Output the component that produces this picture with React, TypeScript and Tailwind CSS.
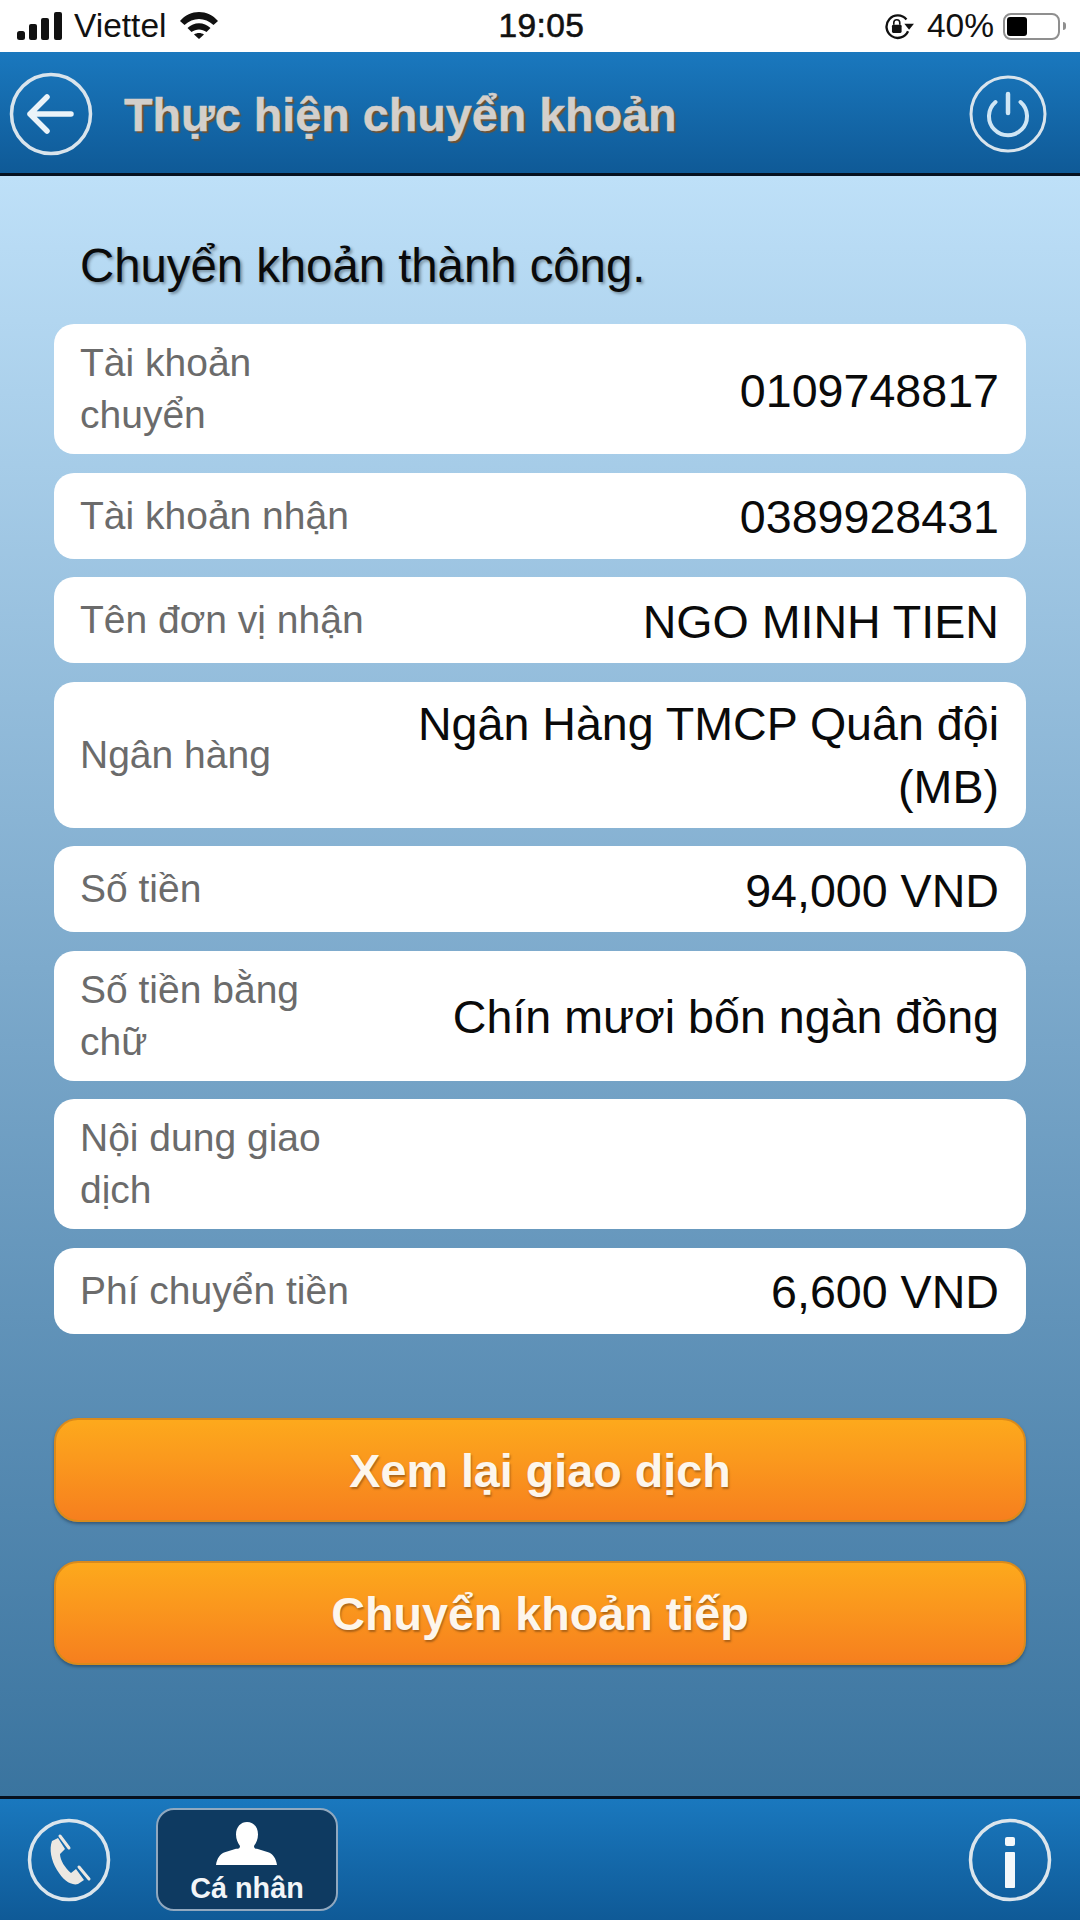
const font = { fontFamily: '"Liberation Sans", Arial, sans-serif' };

type Row = { label: string; value?: string; h: string; multi?: boolean };

const rows: Row[] = [
  { label: "Tài khoản chuyển", value: "0109748817", h: "h-[130px]" },
  { label: "Tài khoản nhận", value: "0389928431", h: "h-[86px]" },
  { label: "Tên đơn vị nhận", value: "NGO MINH TIEN", h: "h-[86px]" },
  { label: "Ngân hàng", value: "Ngân Hàng TMCP Quân đội (MB)", h: "h-[146px]", multi: true },
  { label: "Số tiền", value: "94,000 VND", h: "h-[86px]" },
  { label: "Số tiền bằng chữ", value: "Chín mươi bốn ngàn đồng", h: "h-[130px]" },
  { label: "Nội dung giao dịch", h: "h-[130px]" },
  { label: "Phí chuyển tiền", value: "6,600 VND", h: "h-[86px]" },
];

function StatusBar() {
  return (
    <div className="grid h-[52px] shrink-0 grid-cols-3 items-center bg-white pl-[17px] pr-[14px] text-[33.5px] text-[#111]">
      <div className="flex items-center justify-self-start">
        <svg width="45" height="28" viewBox="0 0 45 28" className="mb-[1px]">
          <rect x="0" y="19" width="8" height="9" rx="2.5" fill="#111" />
          <rect x="12" y="12" width="8" height="16" rx="2" fill="#111" />
          <rect x="24" y="6" width="8" height="22" rx="2" fill="#111" />
          <rect x="37" y="0" width="8" height="28" rx="2" fill="#111" />
        </svg>
        <span className="ml-[12px] leading-none">Viettel</span>
        <svg width="38" height="27" viewBox="0 0 38 27" className="mb-[1px] ml-[13px]">
          <path d="M0 9 C10 -3 28 -3 38 9 L33.5 13 C25 5 13 5 4.5 13 Z" fill="#111" />
          <path d="M7.5 16 C14 9.5 24 9.5 30.5 16 L26.5 20 C22 16.5 16 16.5 11.5 20 Z" fill="#111" />
          <path d="M14 22.5 C17 20.5 21 20.5 24 22.5 L19 27 Z" fill="#111" />
        </svg>
      </div>
      <span className="justify-self-center leading-none tracking-[0.4px] [-webkit-text-stroke:0.6px_#111]">19:05</span>
      <div className="flex items-center justify-self-end">
        <svg width="30" height="26" viewBox="0 0 28 24" className="mr-[12px] mt-[2px]">
          <path d="M20 5 A10.5 10.5 0 1 0 21.5 16" fill="none" stroke="#111" strokeWidth="2.2" />
          <path d="M18 9 L27 9 L22.5 14.5 Z" fill="#111" />
          <rect x="6.5" y="10" width="9" height="7.5" rx="1.2" fill="#111" />
          <path d="M8.2 10 V8 A2.8 2.8 0 0 1 13.8 8 V10" fill="none" stroke="#111" strokeWidth="1.5" />
        </svg>
        <span className="leading-none">40%</span>
        <div className="ml-[9px] flex h-[27px] w-[57px] items-center rounded-[8px] border-[2px] border-[#8f8f8f] p-[2px]">
          <div className="h-full w-[20px] rounded-[3px] bg-black" />
        </div>
        <div className="ml-[3px] h-[8px] w-[3px] rounded-r-full bg-[#8f8f8f]" />
      </div>
    </div>
  );
}

function Header() {
  return (
    <div className="flex h-[124px] shrink-0 items-center justify-between border-b-[3px] border-[#06111f] bg-gradient-to-b from-[#1a78be] to-[#0f5a97] pl-[9px] pr-[33px] pt-[2px]">
      <div className="flex items-center">
        <svg width="84" height="84" viewBox="0 0 84 84" className="blur-[0.4px]">
          <circle cx="42" cy="42" r="39.5" fill="none" stroke="#d9e4ec" strokeWidth="3.5" />
          <path d="M21 42 H62 M38 25 L21 42 L38 59" fill="none" stroke="#eaf3f9" strokeWidth="5.5" strokeLinecap="round" strokeLinejoin="round" />
        </svg>
        <h1 className="ml-[31px] mt-[3px] text-[46.7px] font-bold leading-none text-[#d3cfcb] [-webkit-text-stroke:0.5px_#d3cfcb] [text-shadow:2px_2px_1px_#6f5233]">
          Thực hiện chuyển khoản
        </h1>
      </div>
      <svg width="78" height="78" viewBox="0 0 78 78" className="blur-[0.4px]">
        <circle cx="39" cy="39" r="37" fill="none" stroke="#d9e4ec" strokeWidth="3" />
        <path d="M26.5 27 A19 19 0 1 0 51.5 27" fill="none" stroke="#cfe6f5" strokeWidth="4" strokeLinecap="round" />
        <path d="M39 19 V38" fill="none" stroke="#cfe6f5" strokeWidth="4.5" strokeLinecap="round" />
      </svg>
    </div>
  );
}

function Card({ row }: { row: Row }) {
  return (
    <div className={`flex ${row.h} items-center justify-between rounded-[20px] bg-white pl-[26px] pr-[27px]`}>
      <span className="w-[290px] shrink-0 text-[39px] leading-[52px] text-[#6b6b6b]">{row.label}</span>
      {row.value ? (
        <span className={`mt-[3px] min-w-0 flex-1 text-right text-[46.6px] text-[#0a0a0a] ${row.multi ? "leading-[63px]" : "leading-[52px]"}`}>
          {row.value}
        </span>
      ) : null}
    </div>
  );
}

function OrangeButton({ children }: { children: string }) {
  return (
    <div className="flex h-[104px] items-center justify-center rounded-[24px] border-[2px] border-[#d98a1c] bg-gradient-to-b from-[#fda91c] to-[#f67f1e] pt-[4px] text-[46.7px] font-bold text-[#fdf6ec] shadow-[0_2px_3px_rgba(30,50,70,0.5)] [text-shadow:1px_2px_2px_rgba(120,70,20,0.6)]">
      {children}
    </div>
  );
}

function Footer() {
  return (
    <div className="flex h-[124px] shrink-0 items-center justify-between border-t-[3px] border-[#06111f] bg-gradient-to-b from-[#1a78be] to-[#0f5a97] pl-[27px] pr-[28px]">
      <div className="flex items-center">
        <svg width="84" height="84" viewBox="0 0 84 84" className="blur-[0.4px]">
          <circle cx="42" cy="42" r="39.5" fill="none" stroke="#dbe5ec" strokeWidth="3.5" />
          <path d="M25 23 L31 20 L38 31 L33 36 C33 42 38 50 44 55 L49 51 L57 62 L51 66 C44 68 36 62 30 52 C24 42 22 31 25 23 Z" fill="#ece8e2" />
          <path d="M33 18 L42 30 M52 49 L62 61" fill="none" stroke="#ece8e2" strokeWidth="3" strokeLinecap="round" />
        </svg>
        <div className="ml-[45px] flex h-[103px] w-[182px] flex-col items-center justify-between rounded-[18px] border-[2px] border-[#90a8bf] bg-[#0e3a61] pb-[5px] pt-[12px]">
          <svg width="62" height="44" viewBox="0 0 62 46" preserveAspectRatio="none">
            <path d="M31 0 C37 0 42 5 42 13 C42 18 40 22 38 25 C38 27 39 28 41 28 L53 32 C57 34 60 38 61 45 H0 C1 38 4 34 8 32 L20 28 C23 28 24 27 24 25 C22 22 20 18 20 13 C20 5 25 0 31 0 Z" fill="#ffffff" />
          </svg>
          <span className="text-[28.8px] font-bold leading-[32px] text-[#f2f5f8]">Cá nhân</span>
        </div>
      </div>
      <svg width="84" height="84" viewBox="0 0 84 84" className="blur-[0.4px]">
        <circle cx="42" cy="42" r="39.5" fill="none" stroke="#dbe5ec" strokeWidth="3.5" />
        <rect x="37" y="19" width="10" height="9" rx="2" fill="#f3f8fb" />
        <rect x="37" y="34" width="10" height="36" rx="1" fill="#f3f8fb" />
      </svg>
    </div>
  );
}

export default function App() {
  return (
    <div style={font} className="flex h-[1920px] w-[1080px] flex-col overflow-hidden">
      <StatusBar />
      <Header />
      <main className="flex min-h-0 flex-1 flex-col bg-gradient-to-b from-[#bee0f8] to-[#3a749f] pl-[54px] pr-[54px]">
        <p className="mb-[32px] mt-[64px] pl-[26px] text-[47.3px] leading-[52px] text-[#0a0a0a] [text-shadow:2px_2px_3px_rgba(40,50,60,0.45)]">
          Chuyển khoản thành công.
        </p>
        <div className="flex flex-col gap-[18.5px]">
          {rows.map((r) => (
            <Card key={r.label} row={r} />
          ))}
        </div>
        <div className="mt-[84px] flex flex-col gap-[39px]">
          <OrangeButton>Xem lại giao dịch</OrangeButton>
          <OrangeButton>Chuyển khoản tiếp</OrangeButton>
        </div>
      </main>
      <Footer />
    </div>
  );
}
